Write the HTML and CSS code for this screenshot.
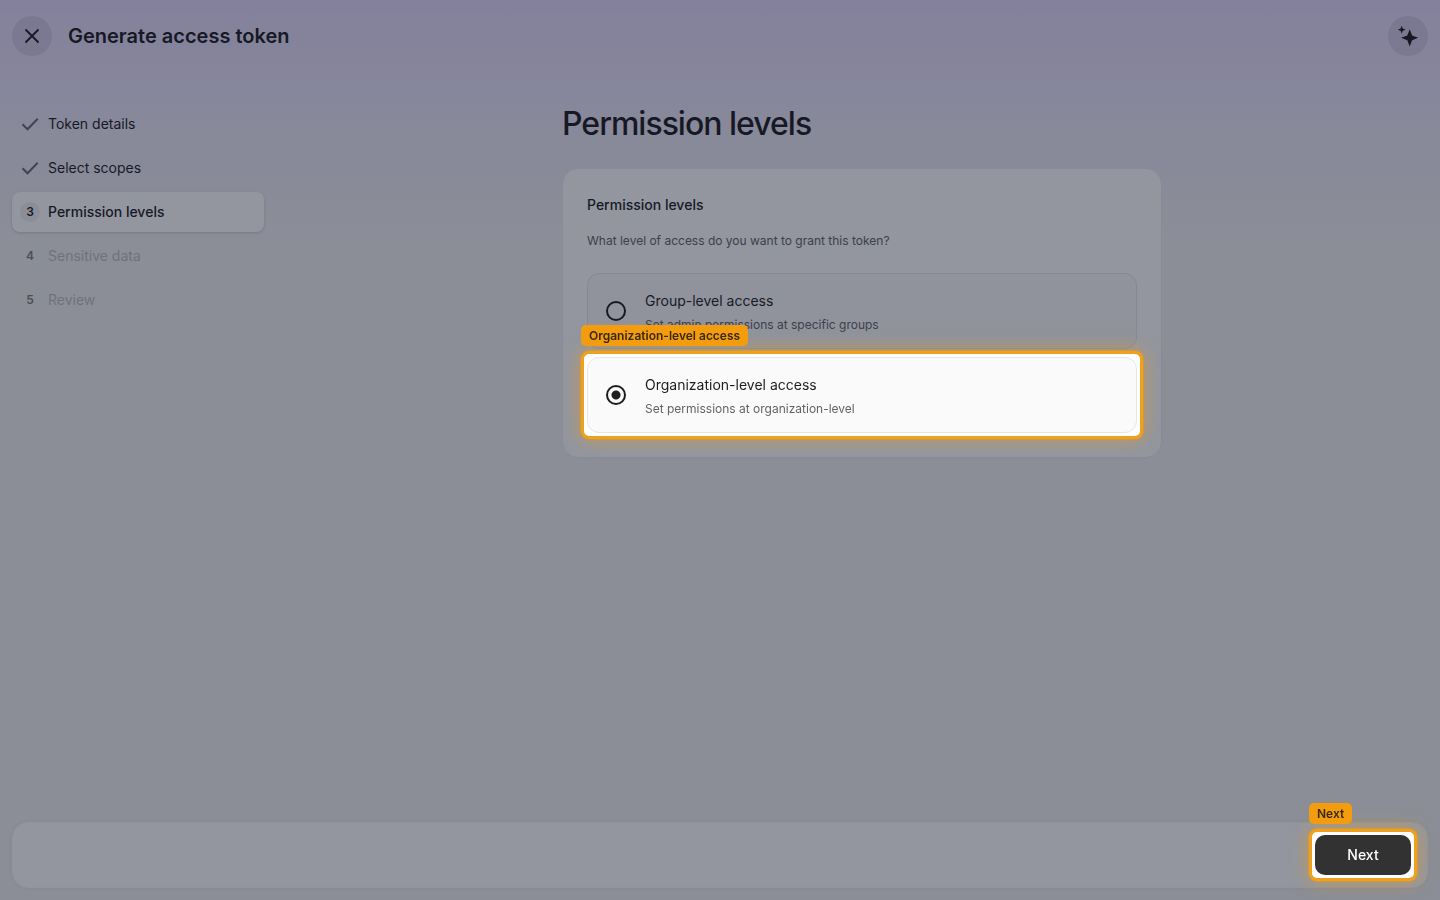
FILE: index.html
```html
<!DOCTYPE html>
<html lang="en">
<head>
<meta charset="utf-8">
<meta name="viewport" content="width=device-width, initial-scale=1">
<title>Generate access token</title>
<link rel="stylesheet" href="styles.css">
</head>
<body>
<header class="topbar">
  <button class="round-btn" type="button" aria-label="Close">
    <svg width="24" height="24" viewBox="0 0 24 24" fill="none" stroke="currentColor" stroke-width="1.800"><path d="M5.500 5.500l13 13M18.500 5.500l-13 13"/></svg>
  </button>
  <p class="topbar-title">Generate access token</p>
  <button class="round-btn round-btn-end" type="button" aria-label="Assistant">
    <svg width="24" height="24" viewBox="0 0 24 24" fill="currentColor"><path d="M13.700 5.200L16.100 11.400L22.300 13.800L16.100 16.200L13.700 22.400L11.300 16.200L5.100 13.800L11.300 11.400zM5.700 1.700L6.800 4.600L9.700 5.700L6.800 6.800L5.700 9.700L4.600 6.800L1.700 5.700L4.600 4.600z"/></svg>
  </button>
</header>

<div class="layout">
  <nav class="steps" aria-label="Steps">
    <ol class="step-list">
      <li class="step"><span class="step-mark"><svg class="check" width="20" height="20" viewBox="0 0 20 20" fill="none" stroke="currentColor" stroke-width="2"><path d="M2.500 10.300l5 5L17.700 4.800"/></svg></span>Token details</li>
      <li class="step"><span class="step-mark"><svg class="check" width="20" height="20" viewBox="0 0 20 20" fill="none" stroke="currentColor" stroke-width="2"><path d="M2.500 10.300l5 5L17.700 4.800"/></svg></span>Select scopes</li>
      <li class="step step-current" aria-current="step"><span class="step-mark">3</span>Permission levels</li>
      <li class="step step-pending"><span class="step-mark">4</span>Sensitive data</li>
      <li class="step step-pending"><span class="step-mark">5</span>Review</li>
    </ol>
  </nav>

  <main class="content">
    <h1 class="page-title">Permission levels</h1>
    <section class="card">
      <h2 class="card-title" id="levels-title">Permission levels</h2>
      <p class="card-text">What level of access do you want to grant this token?</p>
      <div class="options" role="radiogroup" aria-labelledby="levels-title">
        <label class="option" for="level-group">
          <input class="radio" type="radio" name="level" id="level-group">
          <span class="option-body">
            <span class="option-title">Group-level access</span>
            <span class="option-text">Set admin permissions at specific groups</span>
          </span>
        </label>
        <div class="spotlight">
          <span class="tag">Organization-level access</span>
          <label class="option" for="level-org">
            <input class="radio" type="radio" name="level" id="level-org" checked>
            <span class="option-body">
              <span class="option-title">Organization-level access</span>
              <span class="option-text">Set permissions at organization-level</span>
            </span>
          </label>
        </div>
      </div>
    </section>
  </main>
</div>

<footer class="actions">
  <div class="spotlight">
    <span class="tag">Next</span>
    <button class="next-btn" type="button">Next</button>
  </div>
</footer>
<div class="dim"></div>
</body>
</html>
```
FILE: styles.css
```css
* {
  box-sizing: border-box;
}

body {
  margin: 0;
  min-height: 100vh;
  display: flex;
  flex-direction: column;
  font-family: Inter, "Liberation Sans", sans-serif;
  font-size: 14px;
  line-height: 20px;
  color: #1d1d1f;
  background: #f1f1f1 linear-gradient(#e3d8fb, #ece8f5 140px, #f1f1f1 260px) no-repeat;
}

button {
  font: inherit;
  border: 0;
  padding: 0;
  cursor: pointer;
}

.topbar {
  display: flex;
  align-items: center;
  gap: 16px;
  padding: 16px 12px;
}

.topbar-title {
  margin: 0;
  font-size: 20px;
  line-height: 28px;
  font-weight: 600;
}

.round-btn {
  display: grid;
  place-items: center;
  width: 40px;
  height: 40px;
  border-radius: 50%;
  color: #1d1d1f;
  background: rgba(0, 0, 0, 0.08);
}

.round-btn-end {
  margin-left: auto;
}

.layout {
  flex: 1;
  display: flex;
  padding: 32px 0;
}

.steps {
  flex: none;
  width: 284px;
  padding: 0 20px 0 12px;
}

.step-list {
  margin: 0;
  padding: 0;
  list-style: none;
  display: flex;
  flex-direction: column;
  gap: 4px;
}

.step {
  display: flex;
  align-items: center;
  gap: 8px;
  height: 40px;
  padding: 0 8px;
  border-radius: 8px;
}

.step-mark {
  display: grid;
  place-items: center;
  width: 20px;
  height: 20px;
  border-radius: 50%;
  font-size: 12px;
  font-weight: 600;
}

.check {
  color: #6b6b6f;
}

.step-current {
  font-weight: 500;
  background: #fff;
  box-shadow: 0 1px 3px rgba(0, 0, 0, 0.16);
}

.step-current .step-mark {
  background: #f1f1f1;
}

.step-pending {
  color: #bdbdc0;
}

.step-pending .step-mark {
  color: #7c7c80;
}

.content {
  flex: 1;
  max-width: 600px;
  margin: 0 auto;
}

.page-title {
  margin: 0 0 24px;
  font-size: 32px;
  line-height: 40px;
  font-weight: 500;
  letter-spacing: -1px;
}

.card {
  padding: 24px;
  border: 1px solid #ebebee;
  border-radius: 16px;
  background: #fff;
}

.card-title {
  margin: 0 0 14px;
  font-size: 14px;
  line-height: 24px;
  font-weight: 500;
}

.card-text {
  margin: 0 0 22px;
  font-size: 12px;
  color: #636366;
}

.options {
  display: flex;
  flex-direction: column;
  gap: 8px;
}

.option {
  display: flex;
  align-items: center;
  gap: 19px;
  padding: 15px 18px 11px;
  border: 1px solid #e6e6e9;
  border-radius: 12px;
  background: #fafafa;
  cursor: pointer;
}

.option-body {
  display: flex;
  flex-direction: column;
}

.option-title {
  line-height: 24px;
}

.option-text {
  font-size: 12px;
  line-height: 24px;
  color: #636366;
}

.radio {
  appearance: none;
  flex: none;
  width: 20px;
  height: 20px;
  margin: 0 0 4px;
  border: 2px solid #1d1d1f;
  border-radius: 50%;
}

.radio:checked {
  background: radial-gradient(circle, #1d1d1f 4px, transparent 5px);
}

.actions {
  display: flex;
  justify-content: flex-end;
  margin: 0 12px 12px;
  padding: 12px 16px;
  border: 1px solid #fbfbfb;
  border-radius: 16px;
  background: #fff;
  box-shadow: 0 0 6px rgba(0, 0, 0, 0.06);
}

.next-btn {
  display: block;
  width: 96px;
  height: 40px;
  border-radius: 10px;
  font-weight: 500;
  color: #fff;
  background: #323232;
}

/* Guided-tour layer: dimmed page with highlighted controls above it */
.dim {
  position: fixed;
  inset: 0;
  z-index: 1;
  background: rgba(15, 23, 42, 0.45);
  pointer-events: none;
}

.spotlight {
  position: relative;
  z-index: 2;
}

.spotlight::before {
  content: "";
  position: absolute;
  inset: -6px;
  z-index: -1;
  border: 3px solid #f0a01c;
  border-radius: 8px;
  background: #fff;
  box-shadow: 0 0 0 1px rgba(245, 158, 11, 0.4), 0 0 18px rgba(245, 158, 11, 0.55);
}

.tag {
  position: absolute;
  left: -6px;
  bottom: calc(100% + 11px);
  padding: 2px 8px;
  border-radius: 5px;
  font-size: 12px;
  line-height: 17px;
  font-weight: 600;
  white-space: nowrap;
  color: #39290f;
  background: #f39c0d;
}
```
